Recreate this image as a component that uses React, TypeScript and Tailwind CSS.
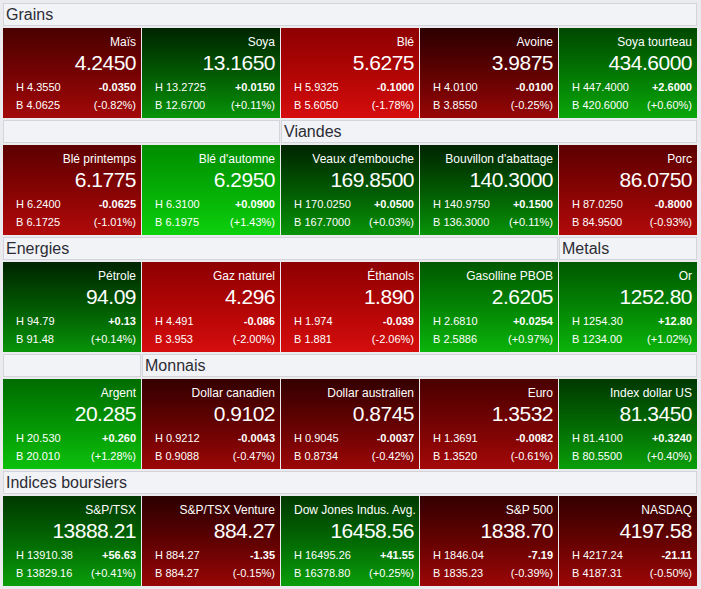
type Quote = {
  name: string;
  price: string;
  high: string;
  low: string;
  change: string;
  pct: number;
};

type Section = {
  headers: { label: string; span: string }[];
  quotes: Quote[];
};

const sections: Section[] = [
  {
    headers: [{ label: "Grains", span: "col-span-5" }],
    quotes: [
      { name: "Maïs", price: "4.2450", high: "4.3550", low: "4.0625", change: "-0.0350", pct: -0.82 },
      { name: "Soya", price: "13.1650", high: "13.2725", low: "12.6700", change: "+0.0150", pct: 0.11 },
      { name: "Blé", price: "5.6275", high: "5.9325", low: "5.6050", change: "-0.1000", pct: -1.78 },
      { name: "Avoine", price: "3.9875", high: "4.0100", low: "3.8550", change: "-0.0100", pct: -0.25 },
      { name: "Soya tourteau", price: "434.6000", high: "447.4000", low: "420.6000", change: "+2.6000", pct: 0.6 },
    ],
  },
  {
    headers: [
      { label: "", span: "col-span-2" },
      { label: "Viandes", span: "col-span-3" },
    ],
    quotes: [
      { name: "Blé printemps", price: "6.1775", high: "6.2400", low: "6.1725", change: "-0.0625", pct: -1.01 },
      { name: "Blé d'automne", price: "6.2950", high: "6.3100", low: "6.1975", change: "+0.0900", pct: 1.43 },
      { name: "Veaux d'embouche", price: "169.8500", high: "170.0250", low: "167.7000", change: "+0.0500", pct: 0.03 },
      { name: "Bouvillon d'abattage", price: "140.3000", high: "140.9750", low: "136.3000", change: "+0.1500", pct: 0.11 },
      { name: "Porc", price: "86.0750", high: "87.0250", low: "84.9500", change: "-0.8000", pct: -0.93 },
    ],
  },
  {
    headers: [
      { label: "Energies", span: "col-span-4" },
      { label: "Metals", span: "col-span-1" },
    ],
    quotes: [
      { name: "Pétrole", price: "94.09", high: "94.79", low: "91.48", change: "+0.13", pct: 0.14 },
      { name: "Gaz naturel", price: "4.296", high: "4.491", low: "3.953", change: "-0.086", pct: -2.0 },
      { name: "Éthanols", price: "1.890", high: "1.974", low: "1.881", change: "-0.039", pct: -2.06 },
      { name: "Gasolline PBOB", price: "2.6205", high: "2.6810", low: "2.5886", change: "+0.0254", pct: 0.97 },
      { name: "Or", price: "1252.80", high: "1254.30", low: "1234.00", change: "+12.80", pct: 1.02 },
    ],
  },
  {
    headers: [
      { label: "", span: "col-span-1" },
      { label: "Monnais", span: "col-span-4" },
    ],
    quotes: [
      { name: "Argent", price: "20.285", high: "20.530", low: "20.010", change: "+0.260", pct: 1.28 },
      { name: "Dollar canadien", price: "0.9102", high: "0.9212", low: "0.9088", change: "-0.0043", pct: -0.47 },
      { name: "Dollar australien", price: "0.8745", high: "0.9045", low: "0.8734", change: "-0.0037", pct: -0.42 },
      { name: "Euro", price: "1.3532", high: "1.3691", low: "1.3520", change: "-0.0082", pct: -0.61 },
      { name: "Index dollar US", price: "81.3450", high: "81.4100", low: "80.5500", change: "+0.3240", pct: 0.4 },
    ],
  },
  {
    headers: [{ label: "Indices boursiers", span: "col-span-5" }],
    quotes: [
      { name: "S&P/TSX", price: "13888.21", high: "13910.38", low: "13829.16", change: "+56.63", pct: 0.41 },
      { name: "S&P/TSX Venture", price: "884.27", high: "884.27", low: "884.27", change: "-1.35", pct: -0.15 },
      { name: "Dow Jones Indus. Avg.", price: "16458.56", high: "16495.26", low: "16378.80", change: "+41.55", pct: 0.25 },
      { name: "S&P 500", price: "1838.70", high: "1846.04", low: "1835.23", change: "-7.19", pct: -0.39 },
      { name: "NASDAQ", price: "4197.58", high: "4217.24", low: "4187.31", change: "-21.11", pct: -0.5 },
    ],
  },
];

// colour steps by size of the move
const tone = (pct: number) => {
  const a = Math.abs(pct);
  if (pct < 0) {
    if (a < 0.3) return "from-[#2c0000] to-[#980606]";
    if (a < 0.55) return "from-[#340000] to-[#9c0707]";
    if (a < 0.85) return "from-[#4a0000] to-[#a40909]";
    if (a < 1.2) return "from-[#5c0000] to-[#b20a0a]";
    return "from-[#8e0000] to-[#d60d0d]";
  }
  if (a < 0.2) return "from-[#002400] to-[#089408]";
  if (a < 0.5) return "from-[#003800] to-[#0a9e0a]";
  if (a < 0.8) return "from-[#004800] to-[#0aa80a]";
  if (a < 1.2) return "from-[#005800] to-[#0bb40b]";
  if (a < 1.35) return "from-[#006c00] to-[#0cc00c]";
  return "from-[#008c00] to-[#0dd00d]";
};

const fmtPct = (pct: number) => `(${pct >= 0 ? "+" : "-"}${Math.abs(pct).toFixed(2)}%)`;

const Tile = ({ q }: { q: Quote }) => (
  <div className={`h-[90px] bg-linear-to-b ${tone(q.pct)} text-white pl-[13px] pr-[5px] pt-[7px]`}>
    <div className="text-right text-[12px] leading-[14px] whitespace-nowrap">{q.name}</div>
    <div className="text-right text-[21px] leading-[27px] tracking-[-0.5px] whitespace-nowrap">{q.price}</div>
    <div className="mt-[2px] text-[11px] leading-[18px]">
      <div className="flex justify-between">
        <span>H {q.high}</span>
        <span className="font-bold">{q.change}</span>
      </div>
      <div className="flex justify-between">
        <span>B {q.low}</span>
        <span>{fmtPct(q.pct)}</span>
      </div>
    </div>
  </div>
);

export default function App() {
  return (
    <div
      className="w-[701px] h-[589px] bg-[#ebebef] pl-[3px] pr-[4px] pt-[3px] overflow-hidden"
      style={{ fontFamily: '"Liberation Sans", Arial, sans-serif' }}
    >
      {sections.map((s, i) => (
        <div key={i} className="mb-[2px]">
          <div className="grid grid-cols-5 gap-x-[1px]">
            {s.headers.map((h, j) => (
              <div
                key={j}
                className={`${h.span} h-[23px] border border-[#d4d5da] bg-[#f2f3f7] pl-[2px] text-[16px] leading-[21px] text-[#2c2c34]`}
              >
                {h.label}
              </div>
            ))}
          </div>
          <div className="mt-[2px] grid grid-cols-5 gap-x-[1px]">
            {s.quotes.map((q) => (
              <Tile key={q.name} q={q} />
            ))}
          </div>
        </div>
      ))}
    </div>
  );
}
